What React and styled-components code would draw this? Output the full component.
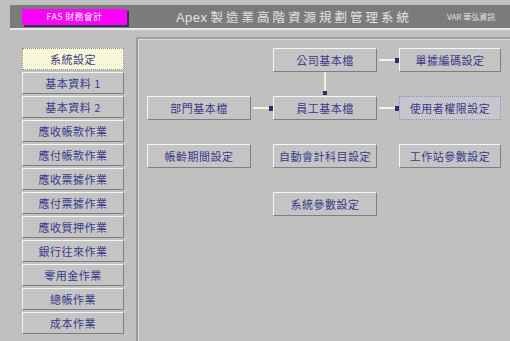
import React from "react";
import styled, { createGlobalStyle, css } from "styled-components";

const GlobalStyle = createGlobalStyle`
  html, body {
    margin: 0;
    padding: 0;
    background: #c0c0c0;
  }
  body {
    font-family: "Noto Sans CJK TC", "Liberation Sans", sans-serif;
  }
`;

const Screen = styled.div`
  width: 510px;
  height: 341px;
  background: #c0c0c0;
  overflow: hidden;
  display: flex;
  flex-direction: column;
`;

const HeaderWrap = styled.div`
  padding: 5px 0 0 10px;
`;

const Header = styled.div`
  height: 23px;
  background: #7b7b7b;
  border-bottom: 2px solid #e8e8e8;
  display: flex;
  align-items: center;
  padding-left: 12px;
`;

const Badge = styled.div`
  width: 105px;
  height: 16px;
  background: #ff00ff;
  color: #ffffff;
  font-size: 9px;
  line-height: 16px;
  text-align: center;
  box-shadow: 2px 2px 0 #34345a;
  letter-spacing: 0.3px;
`;

const Title = styled.div`
  flex: 1;
  text-align: center;
  color: #e2e2e2;
  font-size: 12.5px;
  letter-spacing: 3px;
  padding-left: 14px;
`;

const Latin = styled.span`
  font-family: "Liberation Sans", sans-serif;
  font-size: 13px;
  letter-spacing: 0.5px;
  margin-right: 3px;
`;

const Vendor = styled.div`
  width: 63px;
  color: #e6e6e6;
  font-size: 8px;
`;

const Body = styled.div`
  flex: 1;
  display: flex;
  margin-top: 7px;
`;

const Sidebar = styled.div`
  width: 136px;
  padding: 11px 0 0 22px;
  box-sizing: border-box;
  display: flex;
  flex-direction: column;
  gap: 2px;
`;

const Panel = styled.div`
  flex: 1;
  border-left: 2px solid #9a9a92;
  border-top: 2px solid #a4a49c;
  box-shadow: inset 1px 1px 0 #d8d8d0;
  padding: 9px 0 0 9px;
`;

const Grid = styled.div`
  display: grid;
  grid-template-columns: 104px 104px 102px;
  grid-auto-rows: 24px;
  column-gap: 22px;
  row-gap: 24px;
`;

const bevel = css`
  box-sizing: border-box;
  border: 1px solid;
  border-color: #f6f6f6 #7e7e7e #7e7e7e #f6f6f6;
  background: #c4c4c4;
  color: #3a3a88;
  font-size: 11px;
  display: flex;
  align-items: center;
  justify-content: center;
  letter-spacing: 0.5px;
`;

const SideButton = styled.div`
  ${bevel}
  width: 102px;
  height: 22px;
  ${(p) =>
    p.$active &&
    css`
      background: #f7f6d6;
      border: 1px dotted #8e8e70;
      box-shadow: inset 0 0 0 1px #fbfbe8;
    `}
`;

const connector = css`
  &::before {
    content: "";
    position: absolute;
    background: #f2f2e4;
  }
  &::after {
    content: "";
    position: absolute;
    background: #2e2e66;
  }
`;

const NodeButton = styled.div`
  ${bevel}
  position: relative;
  grid-column: ${(p) => p.$col};
  grid-row: ${(p) => p.$row};
  ${(p) =>
    p.$focus &&
    css`
      border: 1px dotted #8c8cc8;
      background: #c6c6cc;
    `}
  ${(p) =>
    p.$link &&
    css`
      ${connector}
      &::before {
        right: 100%;
        top: 50%;
        width: 19px;
        height: 2px;
        margin-top: -1px;
        margin-right: 2px;
      }
      &::after {
        right: 100%;
        top: 50%;
        width: 4px;
        height: 5px;
        margin-top: -2px;
        margin-right: 1px;
      }
    `}
`;

const VLink = styled.div`
  grid-column: ${(p) => p.$col};
  grid-row: ${(p) => p.$row};
  position: relative;
  pointer-events: none;
  ${connector}
  &::before {
    bottom: 100%;
    left: 50%;
    width: 2px;
    height: 22px;
    margin-left: -1px;
    margin-bottom: 2px;
  }
  &::after {
    bottom: 100%;
    left: 50%;
    width: 4px;
    height: 4px;
    margin-left: -2px;
    margin-bottom: 1px;
  }
`;

const sideItems = [
  "系統設定",
  "基本資料 1",
  "基本資料 2",
  "應收帳款作業",
  "應付帳款作業",
  "應收票據作業",
  "應付票據作業",
  "應收質押作業",
  "銀行往來作業",
  "零用金作業",
  "總帳作業",
  "成本作業",
];

const nodes = [
  { label: "公司基本檔", col: 2, row: 1 },
  { label: "單據編碼設定", col: 3, row: 1, link: true },
  { label: "部門基本檔", col: 1, row: 2 },
  { label: "員工基本檔", col: 2, row: 2, link: true },
  { label: "使用者權限設定", col: 3, row: 2, link: true, focus: true },
  { label: "帳齡期間設定", col: 1, row: 3 },
  { label: "自動會計科目設定", col: 2, row: 3 },
  { label: "工作站參數設定", col: 3, row: 3 },
  { label: "系統參數設定", col: 2, row: 4 },
];

export default function App() {
  return (
    <Screen>
      <GlobalStyle />
      <HeaderWrap>
        <Header>
          <Badge>FAS 財務會計</Badge>
          <Title>
            <Latin>Apex</Latin>製造業高階資源規劃管理系統
          </Title>
          <Vendor>VAR 華弘資訊</Vendor>
        </Header>
      </HeaderWrap>
      <Body>
        <Sidebar>
          {sideItems.map((s, i) => (
            <SideButton key={s} $active={i === 0}>
              {s}
            </SideButton>
          ))}
        </Sidebar>
        <Panel>
          <Grid>
            {nodes.map((n) => (
              <NodeButton
                key={n.label}
                $col={n.col}
                $row={n.row}
                $link={n.link}
                $focus={n.focus}
              >
                {n.label}
              </NodeButton>
            ))}
            <VLink $col={2} $row={2} />
          </Grid>
        </Panel>
      </Body>
    </Screen>
  );
}
